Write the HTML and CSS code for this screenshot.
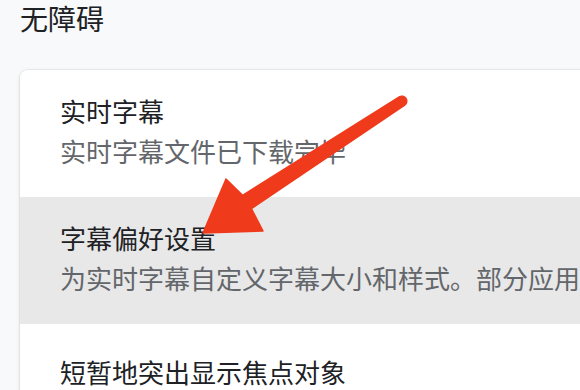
FILE: index.html
```html
<!DOCTYPE html>
<html lang="zh-CN">
<head>
<meta charset="utf-8">
<title>无障碍</title>
<link rel="stylesheet" href="styles.css">
</head>
<body>
<main class="page">
  <h1 class="section-title">无障碍</h1>
  <section class="card">
    <div class="row">
      <div class="row-title">实时字幕</div>
      <div class="row-sub">实时字幕文件已下载完毕</div>
    </div>
    <div class="row row-active">
      <div class="row-title">字幕偏好设置</div>
      <div class="row-sub">为实时字幕自定义字幕大小和样式。部分应用</div>
    </div>
    <div class="row row-single">
      <div class="row-title">短暂地突出显示焦点对象</div>
    </div>
  </section>
</main>
<svg class="arrow" width="580" height="390" viewBox="0 0 580 390" aria-hidden="true">
  <path d="M399.3 96.8 L242.6 195.3 L226 179 L203 233 L263 231 L251.4 208.7 L404.7 105.2 A5 5 0 0 0 399.3 96.8 Z" fill="#f03a1c" stroke="#f03a1c" stroke-width="1.5" stroke-linejoin="round"/>
</svg>
</body>
</html>
```
FILE: styles.css
```css
html, body {
  margin: 0;
  padding: 0;
}
body {
  width: 580px;
  height: 390px;
  overflow: hidden;
  background: #f8f9fa;
  font-family: "Noto Sans CJK SC", "Noto Sans", sans-serif;
  position: relative;
}
.page {
  display: flex;
  flex-direction: column;
}
.section-title {
  margin: 0;
  padding-left: 20px;
  font-size: 28px;
  line-height: 36px;
  font-weight: 400;
  color: #202124;
}
.card {
  margin: 34px 0 0 20px;
  width: 640px;
  background: #ffffff;
  border-radius: 8px;
  box-shadow: 0 0 0 1px rgba(0,0,0,0.04), 0 1px 4px rgba(0,0,0,0.12);
  overflow: hidden;
  display: flex;
  flex-direction: column;
}
.row {
  padding: 21px 0 26px 40px;
  display: flex;
  flex-direction: column;
  white-space: nowrap;
}
.row-active {
  background: #e8e8e8;
}
.row-single {
  padding: 28px 0 28px 40px;
}
.row-title {
  font-size: 26px;
  line-height: 40px;
  color: #202124;
}
.row-sub {
  font-size: 26px;
  line-height: 40px;
  color: #63666a;
}
.arrow {
  position: absolute;
  left: 0;
  top: 0;
  pointer-events: none;
}
```
